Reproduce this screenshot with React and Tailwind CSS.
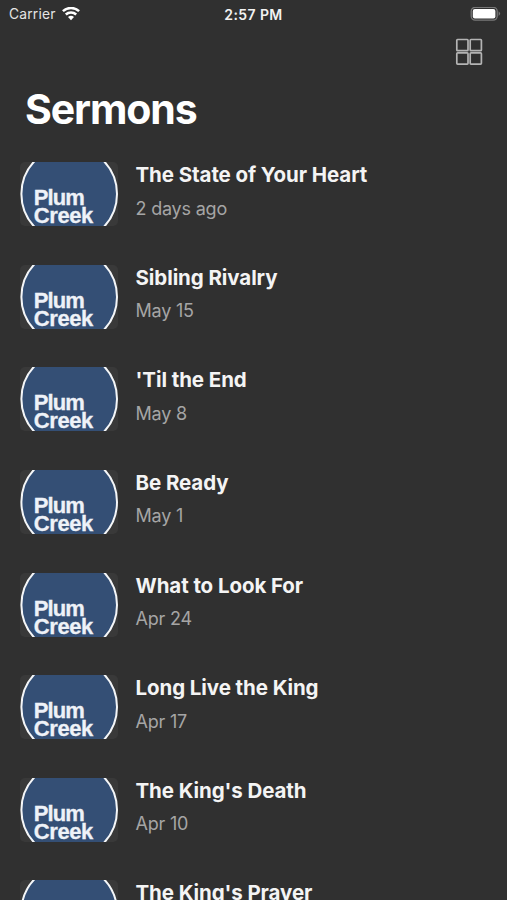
const sermons = [
  ["The State of Your Heart", "2 days ago"],
  ["Sibling Rivalry", "May 15"],
  ["'Til the End", "May 8"],
  ["Be Ready", "May 1"],
  ["What to Look For", "Apr 24"],
  ["Long Live the King", "Apr 17"],
  ["The King's Death", "Apr 10"],
  ["The King's Prayer", "Apr 3"],
];

function WifiIcon() {
  return (
    <svg className="ml-[6px] h-[14px] w-[18px]" viewBox="0 0 18 14" fill="none" stroke="#fff" strokeWidth="2.5">
      <path d="M0.9 4.2 A11.8 11.8 0 0 1 17.1 4.2" />
      <path d="M3.8 7.5 A7.6 7.6 0 0 1 14.2 7.5" />
      <path d="M9 13.2 L6 10.1 A4.4 4.4 0 0 1 12 10.1 Z" fill="#fff" stroke="none" />
    </svg>
  );
}

function BatteryIcon() {
  return (
    <svg className="h-[15px] w-[31px]" viewBox="0 0 31 15">
      <rect x="1.2" y="0.3" width="26" height="12.8" rx="4" fill="none" stroke="#787878" strokeWidth="1.3" />
      <rect x="2.8" y="1.9" width="22.6" height="9.6" rx="2" fill="#fff" />
      <path d="M28.6 4.3 Q31.6 6.6 28.6 8.9 Z" fill="#787878" />
    </svg>
  );
}

function GridIcon() {
  return (
    <svg className="h-7 w-7" viewBox="0 0 28 28" fill="none" stroke="#b4b4b4" strokeWidth="1.7">
      <rect x="1.8" y="1.5" width="11.2" height="11.2" rx="0.8" />
      <rect x="15.2" y="1.5" width="11.2" height="11.2" rx="0.8" />
      <rect x="1.8" y="14.9" width="11.2" height="11.2" rx="0.8" />
      <rect x="15.2" y="14.9" width="11.2" height="11.2" rx="0.8" />
    </svg>
  );
}

function Thumbnail() {
  return (
    <svg className="h-16 w-[98px] shrink-0 rounded-[5px] bg-[#393939]" viewBox="0 0 98 64">
      <circle cx="49.2" cy="32" r="47.8" fill="#344f75" stroke="#f4f6f8" strokeWidth="2" />
      <g fill="#eef2f8" stroke="#eef2f8" strokeWidth="0.3" fontFamily="'Liberation Sans', Arial, sans-serif" fontWeight="700" fontSize="22">
        <text x="13.8" y="43" textLength="51" lengthAdjust="spacing">Plum</text>
        <text x="13.8" y="61" textLength="59.5" lengthAdjust="spacing">Creek</text>
      </g>
    </svg>
  );
}

export default function App() {
  return (
    <div className="h-[900px] w-[507px] overflow-hidden bg-[#303030] font-['Inter','Liberation_Sans',sans-serif] text-white">
      <header className="grid h-7 grid-cols-3 items-center">
        <div className="flex items-center pl-[9px] text-[13.8px] text-[#e4e4e4]">
          <span className="w-[47px] tracking-[0.2px]">Carrier</span>
          <WifiIcon />
        </div>
        <div className="text-center text-[14px] font-semibold tracking-[0.4px] text-[#f2f2f2]">2:57 PM</div>
        <div className="flex justify-end pr-[6px]">
          <BatteryIcon />
        </div>
      </header>
      <div className="flex h-[50px] justify-end pt-[10px] pr-6">
        <GridIcon />
      </div>
      <h1 className="h-[84px] pt-[6px] pl-[25px] text-[41px] leading-[50px] font-bold tracking-[-1.1px]">Sermons</h1>
      <main className="flex flex-col">
        {sermons.map(([title, date]) => (
          <article key={title} className="flex h-[102.65px] shrink-0 items-start pl-5">
            <Thumbnail />
            <div className="pl-[17.5px]">
              <h2 className="text-[20.5px] leading-[26px] font-bold tracking-[-0.08px] whitespace-nowrap text-[#f4f4f4]">{title}</h2>
              <p className="mt-[8.5px] text-[18px] leading-6 tracking-[-0.2px] text-[#a5a5a5]">{date}</p>
            </div>
          </article>
        ))}
      </main>
    </div>
  );
}
